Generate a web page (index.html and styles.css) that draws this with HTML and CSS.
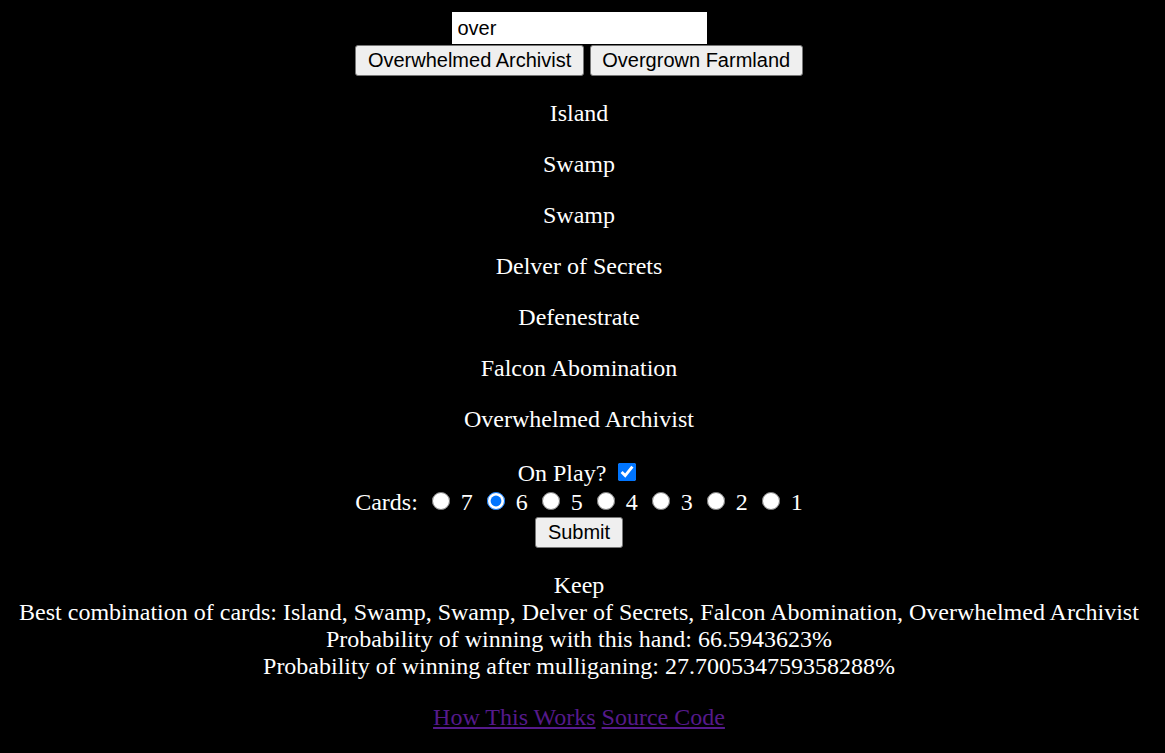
FILE: index.html
```html
<!DOCTYPE html>
<html>
<head>
<meta charset="utf-8">
<link rel="stylesheet" href="styles.css">
</head>
<body>
<div class="app">
  <div class="search">
    <input class="search-input" type="text" value="over"><br>
    <button class="btn">Overwhelmed Archivist</button> <button class="btn">Overgrown Farmland</button>
  </div>
  <p class="card">Island</p>
  <p class="card">Swamp</p>
  <p class="card">Swamp</p>
  <p class="card">Delver of Secrets</p>
  <p class="card">Defenestrate</p>
  <p class="card">Falcon Abomination</p>
  <p class="card">Overwhelmed Archivist</p>
  <form class="options">
    <label>On Play? <input class="check" type="checkbox" checked></label><br>
    <span class="cards">Cards: <input class="radio" type="radio" name="n"> 7 <input class="radio" type="radio" name="n" checked> 6 <input class="radio" type="radio" name="n"> 5 <input class="radio" type="radio" name="n"> 4 <input class="radio" type="radio" name="n"> 3 <input class="radio" type="radio" name="n"> 2 <input class="radio" type="radio" name="n"> 1</span><br>
    <button class="btn" type="button">Submit</button>
  </form>
  <p class="result">Keep<br>Best combination of cards: Island, Swamp, Swamp, Delver of Secrets, Falcon Abomination, Overwhelmed Archivist<br>Probability of winning with this hand: 66.5943623%<br>Probability of winning after mulliganing: 27.700534759358288%</p>
  <p class="links"><a href="#" class="link">How This Works</a> <a href="#" class="link">Source Code</a></p>
</div>
</body>
</html>
```

FILE: styles.css
```css
html {
  background: #000;
}
body {
  margin: 12px 19px 12px 12px;
  background: #000;
  color: #fff;
  font-family: "Liberation Serif", "Times New Roman", serif;
  font-size: 24px;
}
.app {
  text-align: center;
}
.search {
  line-height: 32px;
}
.search-input {
  width: 255px;
  height: 32px;
  box-sizing: border-box;
  font-family: "Liberation Sans", Arial, sans-serif;
  font-size: 20px;
  padding: 1px 5px;
  border: 1px solid #fff;
  background: #fff;
  color: #000;
  margin: 0;
  vertical-align: top;
  border-radius: 0;
}
.btn {
  font-family: "Liberation Sans", Arial, sans-serif;
  font-size: 20px;
  line-height: normal;
  color: #000;
  background: #efefef;
  border: 1px solid #767676;
  border-radius: 3px;
  padding: 2px 11.5px;
  margin: 1px 0 0;
  height: 31px;
  box-sizing: border-box;
  vertical-align: top;
}
.card {
  margin: 24px 0;
}
.options {
  margin: 0;
  padding-top: 2px;
}
.check {
  width: 18px;
  height: 18px;
  margin: 4px 4px 4px 6px;
  accent-color: #0075ff;
}
.radio {
  width: 18px;
  height: 18px;
  margin: 5px 5px 0 8px;
  accent-color: #0075ff;
}
.result {
  margin: 24px 0;
}
.links {
  margin: 24px 0;
}
.link {
  color: #551a8b;
}
```
